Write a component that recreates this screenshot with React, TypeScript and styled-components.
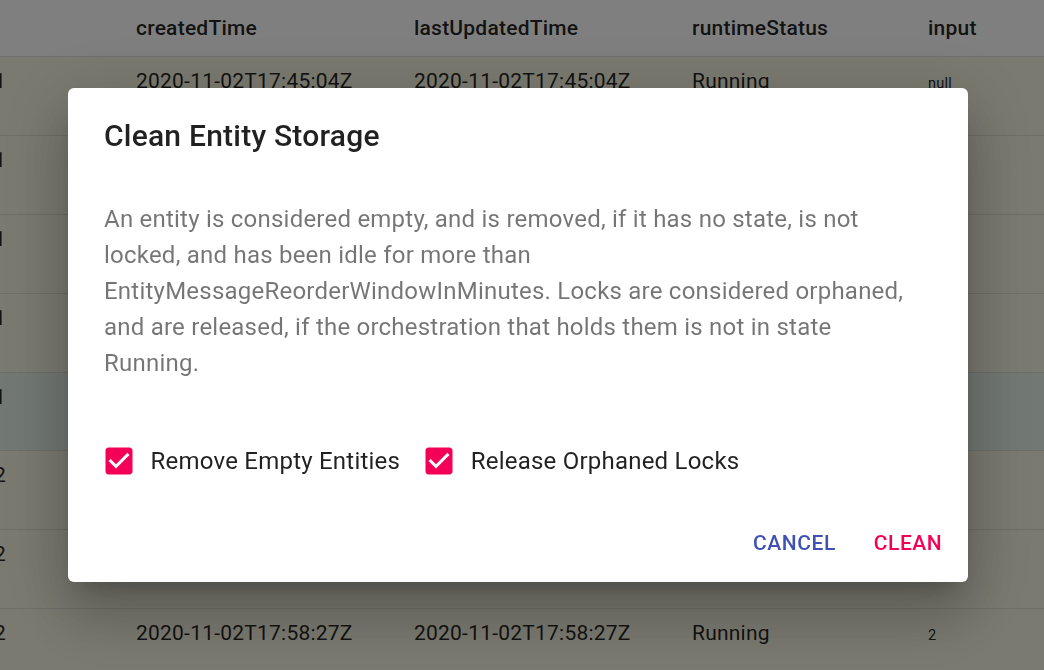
import React from "react";
import styled, { createGlobalStyle } from "styled-components";

const Global = createGlobalStyle`
  html, body { margin: 0; padding: 0; height: 100%; overflow: hidden; }
  body { font-family: Roboto, "Noto Sans", "Liberation Sans", sans-serif; background: #fff; }
`;

const Page = styled.div`
  width: 1044px;
  height: 670px;
  overflow: hidden;
  background: #fff;
  color: rgba(0, 0, 0, 0.87);
`;

const cols = "112px 278px 278px 236px 1fr";

const HeaderRow = styled.div`
  display: grid;
  grid-template-columns: ${cols};
  height: 57px;
  box-sizing: border-box;
  border-bottom: 1px solid #e0e0e0;
  background: #fff;
  align-items: center;
  font-size: 21px;
  line-height: 30px;
  font-weight: 500;
  letter-spacing: 0.01071em;
`;

const HeadCell = styled.div`
  padding-left: 24px;
  white-space: nowrap;
`;

const BodyRow = styled.div<{ $hl?: boolean }>`
  display: grid;
  grid-template-columns: ${cols};
  height: 78.9px;
  box-sizing: border-box;
  border-bottom: 1px solid #dcdcd0;
  background: ${(p) => (p.$hl ? "#e4f0e8" : "#f4f4e2")};
  align-items: start;
  padding-top: 9px;
  font-size: 21px;
  line-height: 30px;
  letter-spacing: 0.01071em;
`;

const Cell = styled.div`
  padding-left: 24px;
  white-space: nowrap;
`;

const IdClip = styled.div`
  display: flex;
  justify-content: flex-end;
  width: 6px;
  overflow: hidden;
  white-space: nowrap;
`;

const IdText = styled.span`
  flex-shrink: 0;
`;

const Small = styled.span`
  font-size: 14.5px;
`;

const Overlay = styled.div`
  position: fixed;
  inset: 0;
  background: rgba(0, 0, 0, 0.5);
  display: flex;
  align-items: center;
  justify-content: center;
  padding-right: 8px;
`;

const Dialog = styled.div`
  width: 900px;
  background: #fff;
  border-radius: 6px;
  box-shadow: 0 16.5px 22.5px -10.5px rgba(0, 0, 0, 0.2),
    0 36px 57px 4.5px rgba(0, 0, 0, 0.14),
    0 13.5px 69px 12px rgba(0, 0, 0, 0.12);
  display: flex;
  flex-direction: column;
`;

const Title = styled.h2`
  margin: 0;
  padding: 24px 36px;
  font-size: 30px;
  line-height: 48px;
  font-weight: 500;
  letter-spacing: 0.0075em;
  color: rgba(0, 0, 0, 0.87);
`;

const Content = styled.div`
  padding: 17px 36px 12px;
`;

const Text = styled.p`
  margin: 0 0 48px;
  font-size: 24px;
  line-height: 36px;
  letter-spacing: 0.00938em;
  color: rgba(0, 0, 0, 0.54);
`;

const CheckRow = styled.div`
  display: flex;
  align-items: center;
`;

const Label = styled.label`
  display: inline-flex;
  align-items: center;
  margin-left: -16.5px;
  margin-right: 24px;
`;

const CheckWrap = styled.span`
  display: inline-flex;
  padding: 13.5px;
`;

const LabelText = styled.span`
  font-size: 24px;
  line-height: 36px;
  letter-spacing: 0.00938em;
  color: rgba(0, 0, 0, 0.87);
`;

const Actions = styled.div`
  display: flex;
  justify-content: flex-end;
  align-items: center;
  padding: 12px;
  gap: 12px;
`;

const Button = styled.button<{ $color: string }>`
  min-width: 96px;
  padding: 9px 12px;
  border: 0;
  background: none;
  border-radius: 6px;
  font-family: Roboto, "Noto Sans", sans-serif;
  font-size: 21px;
  line-height: 36px;
  font-weight: 500;
  letter-spacing: 0.6px;
  text-transform: uppercase;
  color: ${(p) => p.$color};
  cursor: pointer;
`;

const CheckedBox = () => (
  <svg width="36" height="36" viewBox="0 0 24 24" aria-hidden="true">
    <path
      fill="#f50057"
      d="M19 3H5c-1.11 0-2 .9-2 2v14c0 1.1.89 2 2 2h14c1.11 0 2-.9 2-2V5c0-1.1-.89-2-2-2zm-9 14l-5-5 1.41-1.41L10 14.17l7.59-7.59L19 8l-9 9z"
    />
  </svg>
);

type Row = { id: string; created: string; updated: string; status: string; input: string; hl?: boolean };

const rows: Row[] = [
  { id: "entity1", created: "2020-11-02T17:45:04Z", updated: "2020-11-02T17:45:04Z", status: "Running", input: "null" },
  { id: "entity1", created: "2020-11-02T17:46:12Z", updated: "2020-11-02T17:46:12Z", status: "Running", input: "null" },
  { id: "entity1", created: "2020-11-02T17:47:30Z", updated: "2020-11-02T17:47:30Z", status: "Running", input: "null" },
  { id: "entity1", created: "2020-11-02T17:49:51Z", updated: "2020-11-02T17:49:51Z", status: "Running", input: "null" },
  { id: "entity1", created: "2020-11-02T17:52:08Z", updated: "2020-11-02T17:52:08Z", status: "Running", input: "null", hl: true },
  { id: "entity2", created: "2020-11-02T17:55:40Z", updated: "2020-11-02T17:55:40Z", status: "Running", input: "2" },
  { id: "entity2", created: "2020-11-02T17:57:02Z", updated: "2020-11-02T17:57:02Z", status: "Running", input: "2" },
  { id: "entity2", created: "2020-11-02T17:58:27Z", updated: "2020-11-02T17:58:27Z", status: "Running", input: "2" },
];

export default function App() {
  return (
    <>
      <Global />
      <Page>
        <HeaderRow>
          <HeadCell />
          <HeadCell>createdTime</HeadCell>
          <HeadCell>lastUpdatedTime</HeadCell>
          <HeadCell>runtimeStatus</HeadCell>
          <HeadCell>input</HeadCell>
        </HeaderRow>
        {rows.map((r, i) => (
          <BodyRow key={i} $hl={r.hl}>
            <IdClip>
              <IdText>{r.id}</IdText>
            </IdClip>
            <Cell>{r.created}</Cell>
            <Cell>{r.updated}</Cell>
            <Cell>{r.status}</Cell>
            <Cell>
              <Small>{r.input}</Small>
            </Cell>
          </BodyRow>
        ))}
      </Page>
      <Overlay>
        <Dialog role="dialog">
          <Title>Clean Entity Storage</Title>
          <Content>
            <Text>
              An entity is considered empty, and is removed, if it has no state, is not locked, and has been idle for
              more than EntityMessageReorderWindowInMinutes. Locks are considered orphaned, and are released, if the
              orchestration that holds them is not in state Running.
            </Text>
            <CheckRow>
              <Label>
                <CheckWrap>
                  <CheckedBox />
                </CheckWrap>
                <LabelText>Remove Empty Entities</LabelText>
              </Label>
              <Label>
                <CheckWrap>
                  <CheckedBox />
                </CheckWrap>
                <LabelText>Release Orphaned Locks</LabelText>
              </Label>
            </CheckRow>
          </Content>
          <Actions>
            <Button $color="#3f51b5">Cancel</Button>
            <Button $color="#f50057">Clean</Button>
          </Actions>
        </Dialog>
      </Overlay>
    </>
  );
}
